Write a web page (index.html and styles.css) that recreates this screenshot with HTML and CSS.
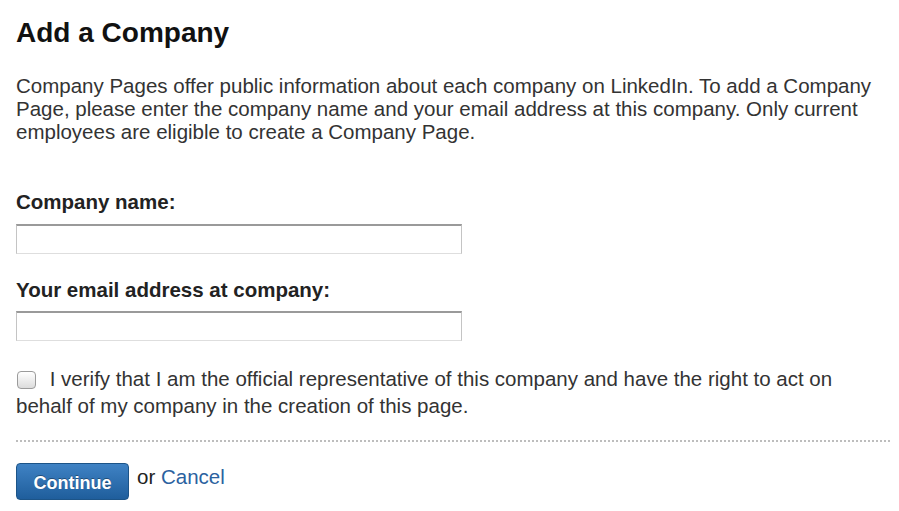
FILE: index.html
```html
<!DOCTYPE html>
<html lang="en">
<head>
    <meta charset="UTF-8">
    <title>Add a Company</title>
    <link rel="stylesheet" href="styles.css">
</head>
<body>
    <div class="page">
        <h1>Add a Company</h1>
        <p class="intro">Company Pages offer public information about each company on LinkedIn. To add a Company Page, please enter the company name and your email address at this company. Only current employees are eligible to create a Company Page.</p>

        <form class="company-form">
            <label class="field-label" for="companyName">Company name:</label>
            <input type="text" id="companyName" class="text-input">

            <label class="field-label email-label" for="companyEmail">Your email address at company:</label>
            <input type="text" id="companyEmail" class="text-input">

            <p class="verify">
                <input type="checkbox" id="verify" class="check">
                <label for="verify">I verify that I am the official representative of this company and have the right to act on behalf of my company in the creation of this page.</label>
            </p>

            <div class="divider"></div>

            <div class="actions">
                <button type="button" class="btn-continue">Continue</button>
                <span class="or">or <a href="#" class="cancel">Cancel</a></span>
            </div>
        </form>
    </div>
</body>
</html>
```

FILE: styles.css
```css
body {
    margin: 0;
    padding: 0;
    background: #ffffff;
    font-family: "Liberation Sans", Arial, Helvetica, sans-serif;
    color: #333333;
}

.page {
    width: 876px;
    padding: 16px 0 0 16px;
}

h1 {
    margin: 0;
    font-size: 28px;
    line-height: 34px;
    font-weight: bold;
    color: #111111;
}

.intro {
    max-width: 866px;
    margin: 24px 0 0;
    font-size: 20.5px;
    line-height: 23px;
}

.company-form {
    display: flex;
    flex-direction: column;
    align-items: flex-start;
}

.field-label {
    display: block;
    margin-top: 47px;
    font-size: 20.5px;
    line-height: 23px;
    font-weight: bold;
    color: #222222;
}

.email-label {
    margin-top: 24px;
}

.text-input {
    box-sizing: border-box;
    width: 446px;
    height: 30px;
    margin: 10px 0 0;
    padding: 4px 6px;
    font-size: 16px;
    background: #ffffff;
    border: 1px solid #c4c4c4;
    border-top: 2px solid #9a9a9a;
    border-bottom-color: #dedede;
    border-radius: 0;
    outline: none;
}

.text-input:first-of-type {
    margin-top: 11px;
}

.verify {
    max-width: 866px;
    margin: 24px 0 0;
    font-size: 20.5px;
    line-height: 27px;
}

.check {
    appearance: none;
    -webkit-appearance: none;
    box-sizing: border-box;
    width: 19px;
    height: 18px;
    margin: 0 8px 0 1px;
    vertical-align: -3px;
    border: 1px solid #9b9b9b;
    border-radius: 4px;
    background: linear-gradient(#ffffff, #dcdcdc);
}

.divider {
    align-self: stretch;
    height: 2px;
    margin-top: 21px;
    background-image: linear-gradient(to right, #bdbdbd 2px, transparent 2px);
    background-size: 4px 2px;
}

.actions {
    display: flex;
    align-items: flex-start;
    margin-top: 21px;
}

.btn-continue {
    box-sizing: border-box;
    width: 113px;
    height: 37px;
    padding: 4px 0 0;
    font-family: "Liberation Sans", Arial, sans-serif;
    font-size: 18px;
    font-weight: bold;
    color: #ffffff;
    text-shadow: 0 -1px 0 rgba(0, 0, 0, 0.35);
    background: linear-gradient(#3f82c4, #1f5e9c);
    border: 1px solid #1c5488;
    border-radius: 4px;
    cursor: pointer;
}

.or {
    margin: 2px 0 0 8px;
    font-size: 20.5px;
    line-height: 23px;
    color: #222222;
}

.cancel {
    color: #2b62a0;
    text-decoration: none;
}
```
